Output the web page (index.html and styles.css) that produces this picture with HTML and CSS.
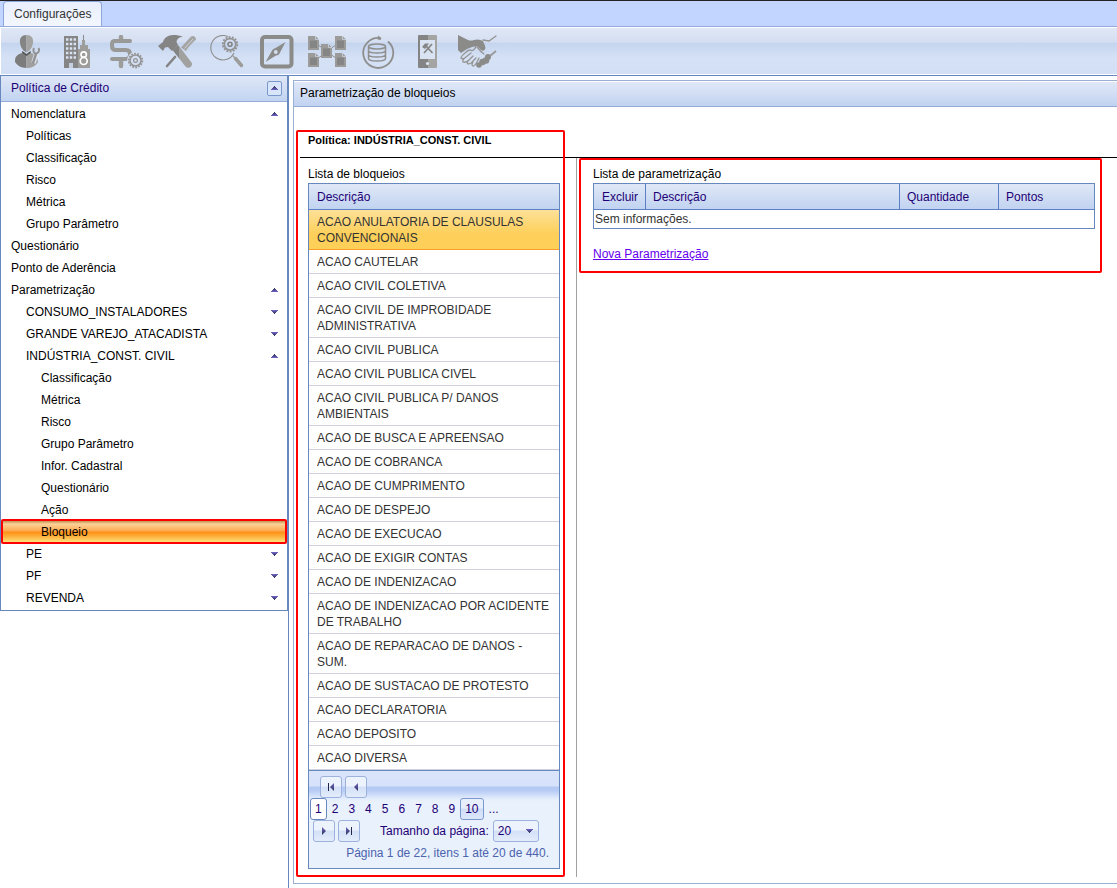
FILE: index.html
```
<!DOCTYPE html>
<html lang="pt-BR">
<head>
<meta charset="utf-8">
<title>Configurações</title>
<link rel="stylesheet" href="styles.css">
</head>
<body>
<svg class="defs" width="0" height="0" aria-hidden="true">
  <defs>
    <linearGradient id="tone" x1="0" x2="1" y1="0" y2="0">
      <stop offset="0.5" stop-color="#848484"/><stop offset="0.5" stop-color="#a4a4a2"/>
    </linearGradient>
    <linearGradient id="arrow-up" x1="0" x2="0" y1="0" y2="1">
      <stop offset="0" stop-color="#2c3050"/><stop offset="1" stop-color="#7266cc"/>
    </linearGradient>
    <linearGradient id="arrow-down" x1="0" x2="0" y1="0" y2="1">
      <stop offset="0" stop-color="#7266cc"/><stop offset="1" stop-color="#2c3050"/>
    </linearGradient>
    <symbol id="up" viewBox="0 0 7 4"><path d="M3 0h1v1h1v1h1v1h1v1H0V3h1V2h1V1h1z" fill="url(#arrow-up)"/></symbol>
    <symbol id="down" viewBox="0 0 7 4"><path d="M0 0h7v1H6v1H5v1H4v1H3V3H2V2H1V1H0z" fill="url(#arrow-down)"/></symbol>
    <symbol id="doc" viewBox="0 0 11 14"><path d="M0 0h7.500l3.500 3.500V14H0z" fill="#9b9b99"/><path d="M2 4.500h7V12H2z" fill="#858585"/><path d="M7.500 0v3.500H11" fill="none" stroke="#d4dded" stroke-width=".7"/></symbol>
  </defs>
</svg>
<header>
  <div class="tabs" role="tablist"><button class="tab" role="tab" aria-selected="true">Configurações</button></div>
  <nav class="toolbar" aria-label="Ferramentas">
    <button class="tool" aria-label="Usuários"><svg viewBox="0 0 40 34">
      <path d="M19.500 0c-5 0-6.800 3-6.600 7 .2 4 2.200 7 3.600 8.500l3 2z" fill="#848484"/><path d="M19.500 0c5 0 6.800 3 6.600 7-.2 4-2.200 7-3.600 8.500l-3 2z" fill="#a4a4a2"/>
      <path d="M15 16l4.500 4V33C14 33 10 30 8 27c0-5 1-7 7-9z" fill="#7c7c7c"/><path d="M24 16l-4.500 4V33c5.500 0 9-2 11.500-6-1-5-1-7-7-9z" fill="#a0a09e"/>
      <path d="M15.500 16l4 3 4-3v2l-4 3-4-3z" fill="#555"/>
      <path d="M26.500 28l3-10" stroke="#dbe3f0" stroke-width="4.500"/><path d="M26.200 27.500l2.800-8.500" stroke="#929292" stroke-width="2.400" stroke-linecap="round"/><path d="M27 13c-1.500 3 0 5.500 2 5.500s4-2.500 2.600-5.500" fill="none" stroke="#929292" stroke-width="2"/></svg></button>
    <button class="tool" aria-label="Empresas"><svg viewBox="0 0 40 34">
      <path d="M7 1h14v32H7z" fill="#858585"/><path d="M9 4.500h10M9 9h10M9 13.500h10M9 18h10M9 22.500h10" stroke="#d8e2f2" stroke-width="2.400" stroke-dasharray="2.400 1.400"/><path d="M12 28h4v5h-4z" fill="#c5cfdf"/>
      <path d="M26.500 0v10" stroke="#8a8a8a"/><path d="M25 5h3v5h3v4h2v19H21V14h2v-4h2z" fill="#9d9d9b"/>
      <g fill="none" stroke="#fff" stroke-width="1.700"><circle cx="26.700" cy="19.500" r="2.700"/><circle cx="26.700" cy="26" r="3.500"/></g></svg></button>
    <button class="tool" aria-label="Crédito"><svg viewBox="0 0 40 34">
      <path d="M14 2v3M14 25v6" stroke="#9d9d9b" stroke-width="4.500" stroke-linecap="round"/><path d="M23 6H8q-3 0-3 3v2q0 4 4 4h10q4 0 4 4v1q0 4-4 4H5" fill="none" stroke="#999997" stroke-width="4" stroke-linecap="round"/>
      <circle cx="28.500" cy="25.500" r="8.500" fill="#d3def2"/><circle cx="28.500" cy="25.500" r="5.500" fill="none" stroke="#929292" stroke-width="1.500"/><circle cx="28.500" cy="25.500" r="6.800" fill="none" stroke="#929292" stroke-width="1.800" stroke-dasharray="1.700 1.350"/><circle cx="28.500" cy="25.500" r="1.900" fill="none" stroke="#929292" stroke-width="1.200"/></svg></button>
    <button class="tool" aria-label="Manutenção"><svg viewBox="0 0 40 34">
      <path d="M10 31l8-9" stroke="#858585" stroke-width="2.600" stroke-linecap="round"/><path d="M24 12.500L34 1.500q4-2 5 3L29 16z" fill="#a4a4a2"/><path d="M27.500 13.500L36 4M29.500 15L38 5.500" stroke="#cfd8e8" stroke-width=".9"/>
      <path d="M1 11l5-4c1-4 5-7 10-7 4 0 7 .5 10 2-4 0-6 2-6.500 5l1.500 3-6 6-4-4-3 .5L6 16z" fill="#848484"/>
      <path d="M15.500 15l5.500-5 1 1.200v12z" fill="#848484"/><path d="M22 11l12.500 16.500c2 4-3 7-6 4L22 23.200z" fill="#a1a19f"/></svg></button>
    <button class="tool" aria-label="Pesquisa"><svg viewBox="0 0 40 34">
      <path d="M21 1.600A12.200 12.200 0 1 0 27 18" fill="none" stroke="#8c8c8c" stroke-width="1.100"/><path d="M25 20l3 3" stroke="#999" stroke-width="1.200"/><path d="M28.500 23.500l6 7" stroke="#9c9c9a" stroke-width="3.500" stroke-linecap="round"/>
      <circle cx="23" cy="9.300" r="5.700" fill="none" stroke="#929292" stroke-width="1.600"/><circle cx="23" cy="9.300" r="7.200" fill="none" stroke="#929292" stroke-width="1.900" stroke-dasharray="1.900 1.330"/><circle cx="23" cy="9.300" r="2" fill="none" stroke="#858585" stroke-width="1.600"/></svg></button>
    <button class="tool" aria-label="Bússola"><svg viewBox="0 0 40 34">
      <rect x="5" y="2" width="29.500" height="29.500" rx="3" fill="none" stroke="#8b8b8a" stroke-width="4"/><path d="M28.500 7L23 17.500q-1 3-4 3L8.500 27l6-10.500q1-3 4-3.500z" fill="#8b8b8a"/><circle cx="18.800" cy="17" r="1.900" fill="#d5dfef"/></svg></button>
    <button class="tool" aria-label="Fluxo de documentos"><svg viewBox="0 0 40 34">
      <path d="M10 9l20 15M30 9L10 24" stroke="#8f8f8f"/><use href="#doc" x="1" y="1" width="11" height="14"/><use href="#doc" x="28" y="1" width="11" height="14"/><use href="#doc" x="14" y="9" width="11" height="14"/><use href="#doc" x="1" y="18" width="11" height="14"/><use href="#doc" x="28" y="18" width="11" height="14"/></svg></button>
    <button class="tool" aria-label="Base de dados"><svg viewBox="0 0 40 34">
      <g fill="none" stroke="#8f8f8e"><path d="M23 3A15 15 0 1 0 31 6.500" stroke-width="1.800"/><ellipse cx="20" cy="11.500" rx="8.500" ry="2.500" stroke-width="1.500"/><path d="M11.500 11.500v12q0 2.500 8.500 2.500t8.500-2.500v-12M11.500 15.500q0 2.500 8.500 2.500t8.500-2.500M11.500 19.500q0 2.500 8.500 2.500t8.500-2.500" stroke-width="1.500"/></g><path d="M20.500 4.500l.5-4 3.500 2.500-1 2z" fill="#8f8f8e"/></svg></button>
    <button class="tool" aria-label="Dispositivo móvel"><svg viewBox="0 0 40 34">
      <rect x="11" width="19" height="33" rx="1" fill="url(#tone)"/><path d="M13 5h15v19H13z" fill="#d9e3f2"/><circle cx="20.500" cy="28.500" r="1.600" fill="#dfe6f3"/><path d="M17 18l8-9M19 11l6.500 7" stroke="#858585" stroke-width="1.800"/><path d="M15 12l3-3.500h4L18 14z" fill="#858585"/></svg></button>
    <button class="tool" aria-label="Parcerias"><svg viewBox="0 0 40 34">
      <path d="M1 0l10 5q3 1 6 0 5-1.500 9 1 2 4 2.500 7-1 4-4.500 2l-4-4-5 1-5 2-6 4-3-3z" fill="#8b8b8a"/>
      <g fill="none" stroke="#959593" stroke-width="1.300" stroke-linecap="round">
        <path d="M19 11q-2 6-6 4-2 0-5 3-3 2-4 5 2 2 5-1l5-4M9 22q-4 3-3 5 3 1 6-2l4-4M12 25q-3 3-1 4 3 0 5-3l3-3M16 27q-2 3 0 4 2 0 4-4l2-4M20 12q4 5 7 7"/>
        <path d="M26 5l6 1 7-5"/>
      </g>
      <g fill="#8b8b8a"><circle cx="22" cy="30" r="2.800"/><circle cx="25.500" cy="27" r="3.300"/><circle cx="29" cy="25.500" r="3.300"/><circle cx="31" cy="22" r="3"/></g>
      <path d="M33 21l6-5" stroke="#999997" stroke-width="1.800"/></svg></button>
  </nav>
</header>
<div class="layout">
  <aside class="side">
    <nav class="menu" aria-label="Política de Crédito">
      <div class="menu-head"><span>Política de Crédito</span><button class="collapse" aria-label="Recolher"><svg class="arrow"><use href="#up"/></svg></button></div>
      <ul class="tree">
        <li><a href="#">Nomenclatura<svg class="arrow"><use href="#up"/></svg></a>
          <ul>
            <li><a href="#">Políticas</a></li><li><a href="#">Classificação</a></li><li><a href="#">Risco</a></li><li><a href="#">Métrica</a></li><li><a href="#">Grupo Parâmetro</a></li>
          </ul></li>
        <li><a href="#">Questionário</a></li>
        <li><a href="#">Ponto de Aderência</a></li>
        <li><a href="#">Parametrização<svg class="arrow"><use href="#up"/></svg></a>
          <ul>
            <li><a href="#">CONSUMO_INSTALADORES<svg class="arrow"><use href="#down"/></svg></a></li>
            <li><a href="#">GRANDE VAREJO_ATACADISTA<svg class="arrow"><use href="#down"/></svg></a></li>
            <li><a href="#">INDÚSTRIA_CONST. CIVIL<svg class="arrow"><use href="#up"/></svg></a>
              <ul>
                <li><a href="#">Classificação</a></li><li><a href="#">Métrica</a></li><li><a href="#">Risco</a></li><li><a href="#">Grupo Parâmetro</a></li><li><a href="#">Infor. Cadastral</a></li><li><a href="#">Questionário</a></li><li><a href="#">Ação</a></li>
                <li><a class="current" href="#" aria-current="page">Bloqueio</a></li>
              </ul></li>
            <li><a href="#">PE<svg class="arrow"><use href="#down"/></svg></a></li>
            <li><a href="#">PF<svg class="arrow"><use href="#down"/></svg></a></li>
            <li><a href="#">REVENDA<svg class="arrow"><use href="#down"/></svg></a></li>
          </ul></li>
      </ul>
    </nav>
  </aside>
  <main class="main">
    <section class="panel">
      <h1 class="panel-head">Parametrização de bloqueios</h1>
      <h2 class="policy">Política: INDÚSTRIA_CONST. CIVIL</h2>
      <div class="columns">
        <section class="blocks">
          <h3 class="label" id="blocks-label">Lista de bloqueios</h3>
          <div class="grid">
            <table class="list" aria-labelledby="blocks-label">
              <thead><tr><th>Descrição</th></tr></thead>
              <tbody>
                <tr class="selected"><td>ACAO ANULATORIA DE CLAUSULAS CONVENCIONAIS</td></tr>
                <tr><td>ACAO CAUTELAR</td></tr>
                <tr><td>ACAO CIVIL COLETIVA</td></tr>
                <tr><td>ACAO CIVIL DE IMPROBIDADE ADMINISTRATIVA</td></tr>
                <tr><td>ACAO CIVIL PUBLICA</td></tr>
                <tr><td>ACAO CIVIL PUBLICA CIVEL</td></tr>
                <tr><td>ACAO CIVIL PUBLICA P/ DANOS AMBIENTAIS</td></tr>
                <tr><td>ACAO DE BUSCA E APREENSAO</td></tr>
                <tr><td>ACAO DE COBRANCA</td></tr>
                <tr><td>ACAO DE CUMPRIMENTO</td></tr>
                <tr><td>ACAO DE DESPEJO</td></tr>
                <tr><td>ACAO DE EXECUCAO</td></tr>
                <tr><td>ACAO DE EXIGIR CONTAS</td></tr>
                <tr><td>ACAO DE INDENIZACAO</td></tr>
                <tr><td>ACAO DE INDENIZACAO POR ACIDENTE DE TRABALHO</td></tr>
                <tr><td>ACAO DE REPARACAO DE DANOS - SUM.</td></tr>
                <tr><td>ACAO DE SUSTACAO DE PROTESTO</td></tr>
                <tr><td>ACAO DECLARATORIA</td></tr>
                <tr><td>ACAO DEPOSITO</td></tr>
                <tr><td>ACAO DIVERSA</td></tr>
              </tbody>
            </table>
            <div class="pager">
              <div class="pager-row first">
                <button class="step" aria-label="Primeira página"><svg viewBox="0 0 8 8"><path d="M1 0h1v8H1z" fill="#23284a"/><path d="M7 0v8L3 4z" fill="url(#arrow-down)"/></svg></button>
                <button class="step" aria-label="Página anterior"><svg viewBox="0 0 8 8"><path d="M6 0v8L2 4z" fill="url(#arrow-down)"/></svg></button>
              </div>
              <div class="pager-row pages">
                <button class="page active" aria-current="page">1</button><button class="page">2</button><button class="page">3</button><button class="page">4</button><button class="page">5</button><button class="page">6</button><button class="page">7</button><button class="page">8</button><button class="page">9</button><button class="page hover">10</button><button class="page">...</button>
              </div>
              <div class="pager-row last">
                <button class="step" aria-label="Próxima página"><svg viewBox="0 0 8 8"><path d="M2 0v8l4-4z" fill="url(#arrow-down)"/></svg></button>
                <button class="step" aria-label="Última página"><svg viewBox="0 0 8 8"><path d="M6 0h1v8H6z" fill="#23284a"/><path d="M1 0v8l4-4z" fill="url(#arrow-down)"/></svg></button>
                <label class="size-label" for="size">Tamanho da página:</label>
                <span class="size"><select id="size"><option>20</option><option>50</option></select><svg class="arrow"><use href="#down"/></svg></span>
              </div>
              <p class="info">Página 1 de 22, itens 1 até 20 de 440.</p>
            </div>
          </div>
        </section>
        <div class="details">
          <section class="params">
            <h3 class="label" id="params-label">Lista de parametrização</h3>
            <table class="param-table" aria-labelledby="params-label">
              <colgroup><col class="c-del"><col><col class="c-qty"><col class="c-pts"></colgroup>
              <thead><tr><th>Excluir</th><th>Descrição</th><th>Quantidade</th><th>Pontos</th></tr></thead>
              <tbody><tr><td colspan="4">Sem informações.</td></tr></tbody>
            </table>
            <a class="new" href="#">Nova Parametrização</a>
          </section>
        </div>
      </div>
    </section>
  </main>
</div>
</body>
</html>
```

FILE: styles.css
```
* { box-sizing: border-box; }

body {
  margin: 0;
  min-height: 100vh;
  display: flex;
  flex-direction: column;
  background: #fff;
  color: #000;
  font: 12px/16px "Liberation Sans", Arial, sans-serif;
}

button, select { font: inherit; color: inherit; margin: 0; padding: 0; }
button { border: 0; background: none; cursor: pointer; }
h1, h2, h3, p, ul { margin: 0; padding: 0; font-size: inherit; font-weight: normal; list-style: none; }
svg { display: block; }
.defs { position: absolute; }
.arrow { width: 7px; height: 4px; }

/* Tabs and toolbar */
.tabs {
  height: 27px;
  padding-left: 3px;
  border-top: 1px solid #222;
  border-bottom: 1px solid #93a9dd;
  background: #c1d5ff;
}
.tab {
  height: 25px;
  padding: 0 10px;
  border: 1px solid #8fa6dc;
  border-bottom: 0;
  border-radius: 4px 4px 0 0;
  background: linear-gradient(#e8effd, #f3f6fd);
  color: #333;
}
.toolbar {
  display: flex;
  height: 48px;
  padding-left: 1px;
  border: 1px solid #fff;
  border-right: 0;
  background: linear-gradient(#dfe7f5 0, #d5dff2 14px, #c5d5ef 15px, #d5e1f5 30px, #d3dff4 100%);
}
.tool { width: 50px; display: flex; justify-content: center; padding-top: 7px; }
.tool svg { width: 40px; height: 34px; }

/* Side menu */
.layout { flex: 1; display: flex; }
.side { width: 288px; flex: none; }
.menu { border: 1px solid #6788be; }
.menu-head {
  height: 26px;
  padding: 0 5px 1px 10px;
  display: flex;
  align-items: center;
  justify-content: space-between;
  border-bottom: 1px solid #94abd8;
  background: linear-gradient(#dfe7f6, #c2d4f2);
  color: #1e0075;
}
.collapse {
  width: 15px;
  height: 15px;
  display: grid;
  place-items: center;
  border: 1px solid #7b98cc;
  border-radius: 2px;
  background: #d9e5fa;
}
.tree { padding: 1px 0; }
.tree a {
  height: 22px;
  padding: 0 9px 0 10px;
  display: flex;
  align-items: center;
  justify-content: space-between;
  color: #000;
  text-decoration: none;
}
.tree ul a { padding-left: 25px; }
.tree ul ul a { padding-left: 40px; }
.tree .current {
  position: relative;
  background: linear-gradient(#c09150 0, #fcd29b 3px, #fda94f 10px, #fd8f16 11px, #feb440 16px, #fde27c 21px);
}
.tree .current::after {
  content: "";
  position: absolute;
  inset: -2px 0 -1px;
  border: 2px solid #f00;
  border-radius: 2px;
}

/* Content panel */
.main {
  flex: 1;
  min-width: 0;
  padding: 4px 0 4px 4px;
  border-left: 1px solid #6788be;
  border-top: 1px solid #6788be;
}
.panel { border: 1px solid #9aafd4; border-right: 0; padding-bottom: 6px; }
.panel-head {
  height: 26px;
  padding: 3px 6px;
  border-top: 1px solid #fff;
  border-bottom: 1px solid #94abd8;
  background: linear-gradient(#e0e8f7, #c1d3f1);
}
.policy {
  margin: 25px 0 0 6px;
  padding: 0 8px 9px;
  border-bottom: 1px solid #000;
  font-size: 11px;
  font-weight: bold;
}
.columns { display: flex; margin-left: 6px; }
.blocks {
  position: relative;
  width: 277px;
  flex: none;
  padding: 8px 16px 8px 8px;
  border-right: 1px solid #a0a0a0;
}
.blocks::after {
  content: "";
  position: absolute;
  inset: -28px 11px 0 -4px;
  border: 2px solid #f00;
  border-radius: 2px;
  pointer-events: none;
}
.label { height: 17px; }

.grid { border: 1px solid #6788be; }
table { width: 100%; border-collapse: separate; border-spacing: 0; color: #333; }
th {
  height: 26px;
  padding: 0 8px;
  border-bottom: 1px solid #5d7fc6;
  background: linear-gradient(#dfe8f6, #c1d3f1);
  color: #1e0075;
  font-weight: normal;
  text-align: left;
}
.list td { padding: 4px 8px 3px; border-bottom: 1px solid #d0d0de; }
.list .selected td {
  border-bottom-color: #fb9d2c;
  background: linear-gradient(#fde199, #fed05b 60%, #fed058) padding-box;
}

/* Pager */
.pager {
  padding: 5px 0 7px;
  border-top: 1px solid #6788be;
  background: linear-gradient(#dae5fb 0, #d6e2fa 15px, #b3c9f3 16px, #b8cdf5 20px, #e0eafb 27px, #e9f1fc 30px);
  color: #1e0075;
}
.pager-row { display: flex; align-items: center; height: 22px; }
.first { padding-left: 11px; gap: 3px; }
.pages { padding-left: 1px; }
.last { padding-left: 4px; gap: 3px; }
.step, .size {
  width: 22px;
  height: 22px;
  display: grid;
  place-items: center;
  border: 1px solid #9db1de;
  border-radius: 3px;
  background: linear-gradient(#edf3fd 45%, #d3e0f7 50%, #e3ecfb);
}
.step svg { width: 8px; height: 8px; }
.page { height: 22px; padding: 0 4px; border: 1px solid transparent; border-radius: 3px; }
.active { border-color: #6788be; background: #fff; }
.hover { border-color: #7b98cc; background: linear-gradient(#e8effc 45%, #cfddf6 50%, #dce7fa); }
.size-label { margin-left: 17px; }
.size { width: 46px; margin-left: 1px; display: flex; align-items: center; padding-right: 5px; }
.size select { flex: 1; min-width: 0; padding-left: 4px; border: 0; background: none; appearance: none; }
.info { margin-top: 3px; padding-right: 10px; text-align: right; color: #4c63ae; }

/* Parameter list */
.details { flex: 1; min-width: 0; padding: 0 15px 0 2px; }
.params { padding: 6px 5px 9px 12px; border: 2px solid #f00; border-radius: 2px; }
.param-table { table-layout: fixed; border: 1px solid #6788be; }
.param-table th + th { border-left: 1px solid #5d7fc6; padding: 0 7px; }
.param-table td { height: 18px; padding: 0 1px; }
.c-del { width: 51px; }
.c-qty { width: 99px; }
.c-pts { width: 96px; }
.new { display: inline-block; margin-top: 17px; color: #60e; }
```
